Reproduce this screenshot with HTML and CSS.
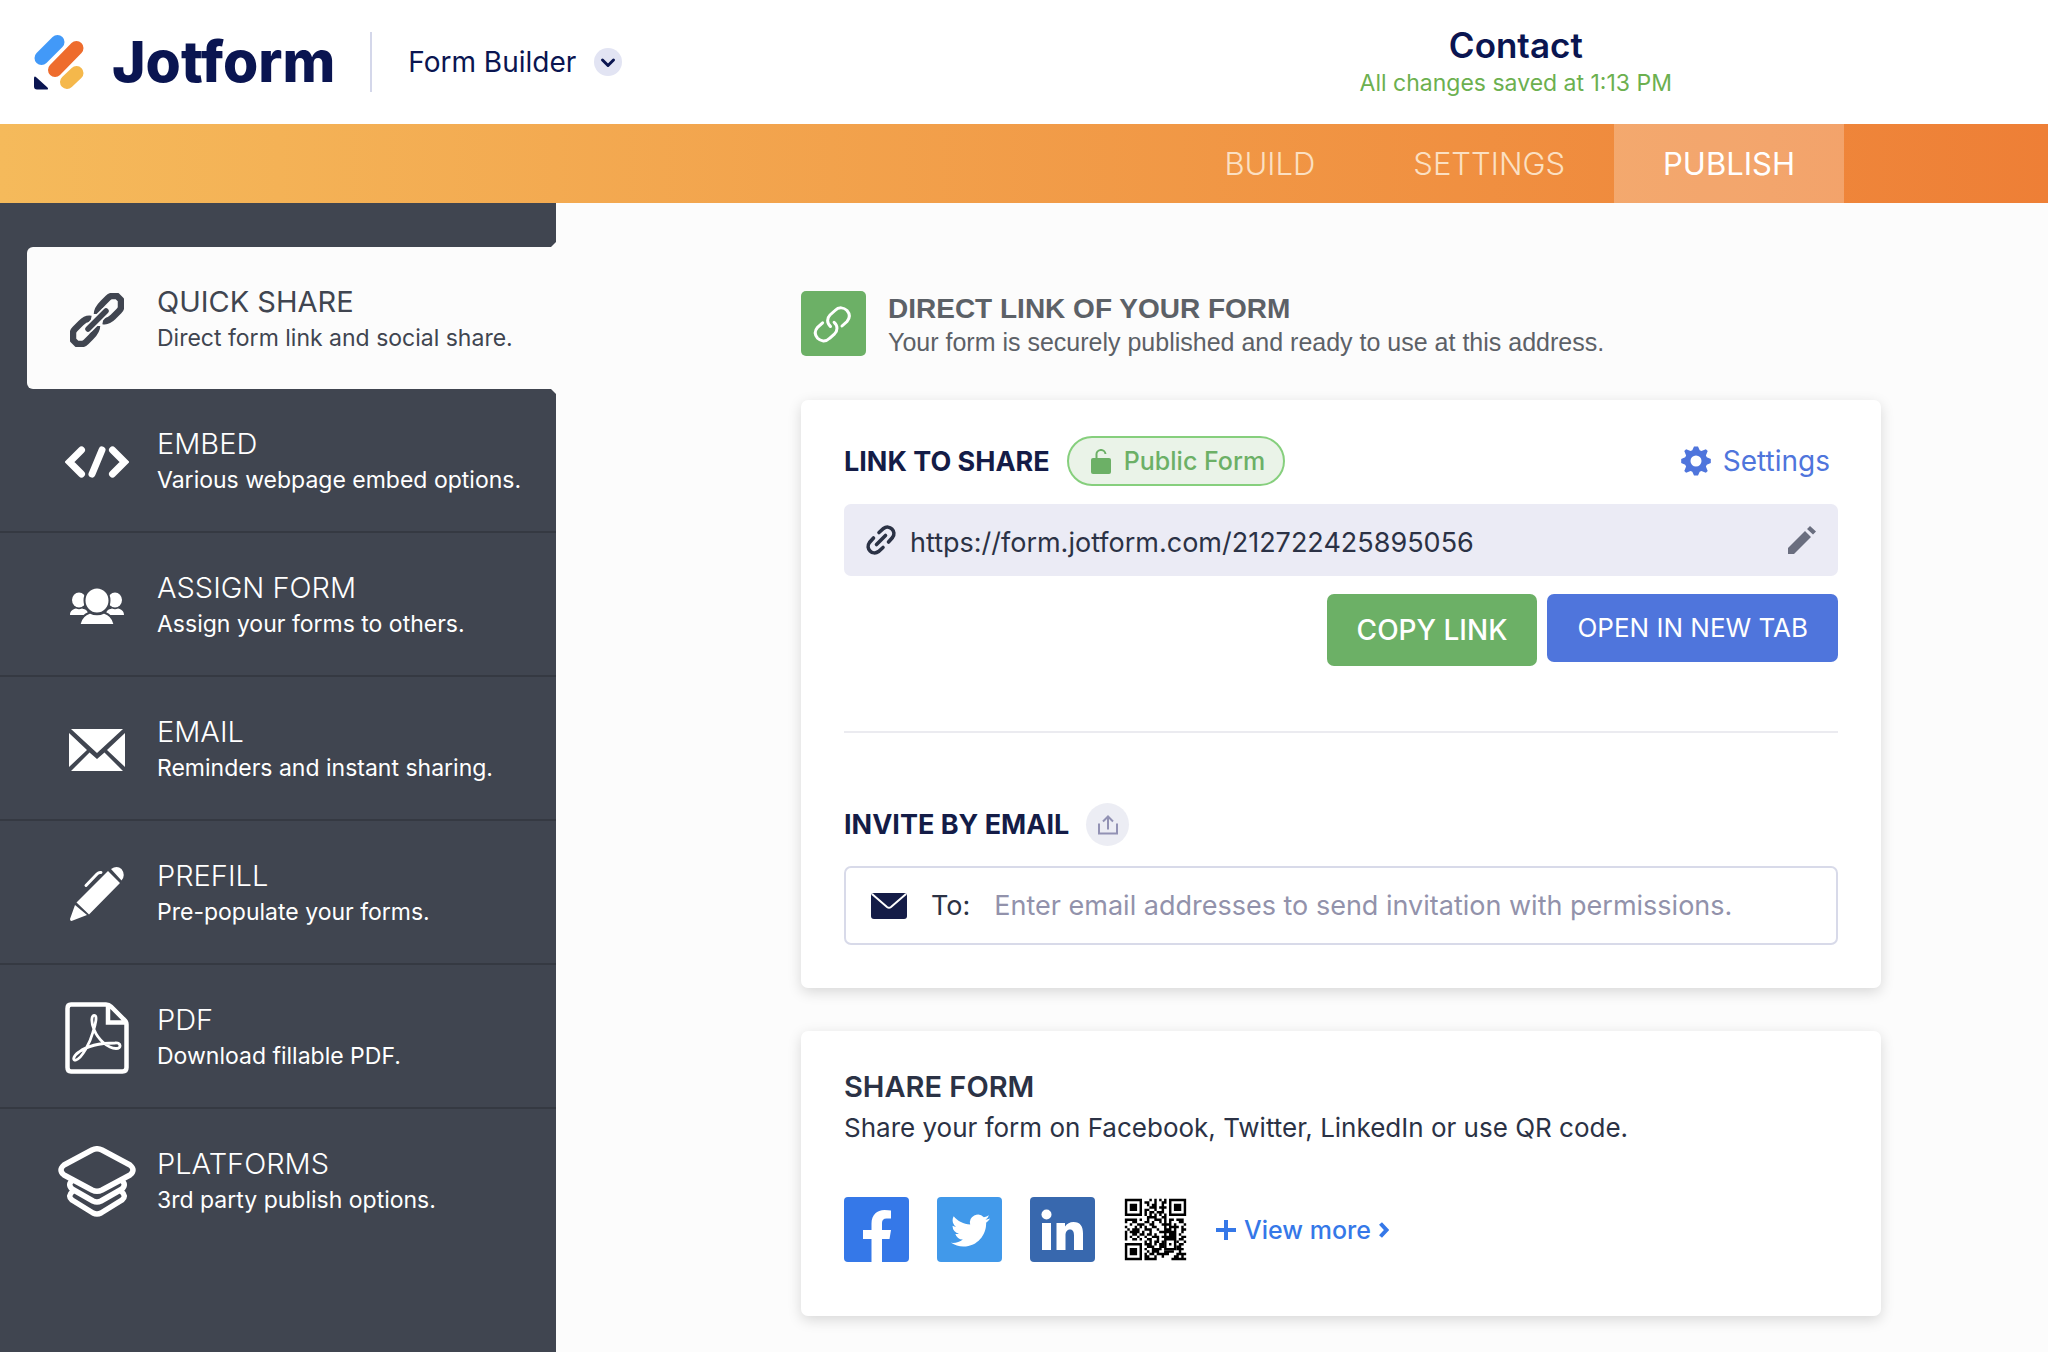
FILE: index.html
```html
<!DOCTYPE html>
<html lang="en">
<head>
<meta charset="utf-8">
<meta name="viewport" content="width=device-width, initial-scale=1">
<title>Contact - Jotform Form Builder</title>
<link rel="stylesheet" href="styles.css">
</head>
<body>
<header class="topbar">
  <div class="brand">
    <a class="logo" href="#" aria-label="Jotform">
      <svg width="50" height="56" viewBox="0 0 50 56" fill="none" stroke-width="14" stroke-linecap="round">
        <path stroke="#4299f8" d="M7.500 24 23.500 8"/>
        <path stroke="#ee6c2d" d="M21 36 42.500 14"/>
        <path stroke="#f5b84b" d="M33 48 42.500 39"/>
        <path fill="#0a1551" d="M0 44.500q0-3.500 2.500-1L13.500 53.500q1.500 2-1 2H3q-3 0-3-3z"/>
      </svg>
      <span class="wordmark">Jotform</span>
    </a>
    <button class="product" type="button">
      Form Builder
      <svg width="28" height="28" viewBox="0 0 28 28" fill="none">
        <circle cx="14" cy="14" r="14" fill="#e2e4f3"/>
        <path d="m8.500 12 5.500 5.500 5.500-5.500" stroke="#0a1551" stroke-width="3" stroke-linecap="round" stroke-linejoin="round"/>
      </svg>
    </button>
  </div>
  <div class="form-title">
    <h1>Contact</h1>
    <p>All changes saved at 1:13 PM</p>
  </div>
</header>

<nav class="tabs">
  <a href="#">BUILD</a>
  <a href="#">SETTINGS</a>
  <a class="current" href="#">PUBLISH</a>
</nav>

<div class="layout">
  <nav class="sidebar">
    <a class="item active" href="#">
      <span class="item-icon">
        <svg width="54" height="54" viewBox="0 0 54 54" fill="none" stroke="#404550" stroke-width="6.500" stroke-linejoin="round">
          <path d="M27 21c0-5 3-8 6-11l5-5q2-2 4-2h5l4 4v7q0 2-2 4l-6 6q-5 5-10 4"/>
          <path d="M27 33c0 5-3 8-6 11l-5 5q-2 2-4 2H7l-4-4v-7q0-2 2-4l6-6q5-5 10-4"/>
          <path d="m19 35 16-16" stroke="#fcfcfc" stroke-width="9" stroke-linecap="round"/>
          <path d="m18 36 18-18" stroke-width="5.500" stroke-linecap="round"/>
        </svg>
      </span>
      <span class="item-text"><span class="item-title">QUICK SHARE</span><span class="item-sub">Direct form link and social share.</span></span>
    </a>
    <a class="item" href="#">
      <span class="item-icon">
        <svg width="64" height="32" viewBox="0 0 64 32" fill="none" stroke="#fff" stroke-width="7" stroke-linecap="round">
          <path d="M16.500 4 4.500 16l12 12M47.500 4l12 12-12 12M37 4l-10 24"/>
        </svg>
      </span>
      <span class="item-text"><span class="item-title">EMBED</span><span class="item-sub">Various webpage embed options.</span></span>
    </a>
    <a class="item" href="#">
      <span class="item-icon">
        <svg width="54" height="36" viewBox="0 0 54 36" fill="#fff">
          <ellipse cx="9" cy="12" rx="7" ry="7.500"/><ellipse cx="45" cy="12" rx="7" ry="7.500"/>
          <path d="M0 27c0-4 3-6 6-6.500q3 1.500 6 0c4 1 6 2 6 6.500zM54 27c0-4-3-6-6-6.500q-3 1.500-6 0c-4 1-6 2-6 6.500z"/>
          <g stroke="#404550" stroke-width="2">
            <path d="M9.500 37c1-8 6-11 10.500-12.500q7 3.500 14 0c4.500 1.500 9.500 4.500 10.500 12.500z"/>
            <ellipse cx="27" cy="12.500" rx="12.500" ry="13"/>
          </g>
        </svg>
      </span>
      <span class="item-text"><span class="item-title">ASSIGN FORM</span><span class="item-sub">Assign your forms to others.</span></span>
    </a>
    <a class="item" href="#">
      <span class="item-icon">
        <svg width="56" height="42" viewBox="0 0 56 42" fill="#fff">
          <path d="M2 0h52L28 24zM0 4l18 17L0 38zM56 4 38 21l18 17zM2 42l18.500-18.500L28 30l7.500-6.500L54 42z"/>
        </svg>
      </span>
      <span class="item-text"><span class="item-title">EMAIL</span><span class="item-sub">Reminders and instant sharing.</span></span>
    </a>
    <a class="item" href="#">
      <span class="item-icon">
        <svg width="54" height="54" viewBox="0 0 54 54" fill="#fff">
          <path d="M5 38 17 48 1.500 54Q0 54 0 52zM6.500 35.500 38 4 50 16 19 47.500zM41 2q6-4 10.500 0 4.500 6 0 11.500z"/>
          <path d="M16 18.500 27 7q2-2 4-1.500" fill="none" stroke="#fff" stroke-width="3" stroke-linecap="round"/>
        </svg>
      </span>
      <span class="item-text"><span class="item-title">PREFILL</span><span class="item-sub">Pre-populate your forms.</span></span>
    </a>
    <a class="item" href="#">
      <span class="item-icon">
        <svg width="64" height="72" viewBox="0 0 64 72" fill="none" stroke="#fff" stroke-width="4.500">
          <path d="M6 2.500h35q3 0 5 2l13 13q2.500 2 2.500 5v43q0 4-4 4H6q-3.500 0-3.500-4v-59q0-4 3.500-4zM43 3v17.500h18"/>
          <path stroke-width="2.800" d="M30 13.500c-4-1-4 7-1 14 4 10 14 19 22 19 6 0 5-6-1-5.500-14 0-28 3-36 9-7 5-6 9-3 8 6-2 14-17 17-28 3-9 4-16 2-16.500z"/>
        </svg>
      </span>
      <span class="item-text"><span class="item-title">PDF</span><span class="item-sub">Download fillable PDF.</span></span>
    </a>
    <a class="item last" href="#">
      <span class="item-icon">
        <svg width="78" height="72" viewBox="0 0 78 72" fill="none" stroke="#fff" stroke-width="5.500" stroke-linejoin="round">
          <path d="M34 4q5-2.500 10 0l28 15q6 5 0 10L44 44q-5 2.500-10 0L6 29q-6-5 0-10z"/>
          <path d="M15 34q-6 4-1 9l21 12q4 2 8 0l21-12q5-5-1-9"/>
          <path d="M15 45q-6 5-1 9l21 13q4 2 8 0l21-13q5-4-1-9"/>
        </svg>
      </span>
      <span class="item-text"><span class="item-title">PLATFORMS</span><span class="item-sub">3rd party publish options.</span></span>
    </a>
  </nav>

  <main class="content">
    <div class="intro">
      <svg class="tile" viewBox="0 0 65 65" fill="none">
        <rect width="65" height="65" rx="5" fill="#6cb066"/>
        <g stroke="#fff" stroke-width="3" stroke-linecap="round">
          <path d="M29.500 35.500C25.500 32 26 27 29 24l5-4.500c4-4 9-3 12 0 3 3.500 3 7.500 0 11L41 35"/>
          <path transform="rotate(180 31.300 33.400)" d="M29.500 35.500C25.500 32 26 27 29 24l5-4.500c4-4 9-3 12 0 3 3.500 3 7.500 0 11L41 35"/>
        </g>
      </svg>
      <div>
        <h2>DIRECT LINK OF YOUR FORM</h2>
        <p>Your form is securely published and ready to use at this address.</p>
      </div>
    </div>

    <section class="card link-card">
      <div class="row">
        <h3>LINK TO SHARE</h3>
        <span class="badge">
          <svg width="20" height="25" viewBox="0 0 20 25">
            <rect y="9" width="20" height="16" rx="2" fill="#6cb066"/>
            <path d="M5.500 10V6a4.500 4.500 0 0 1 9-1" fill="none" stroke="#6cb066" stroke-width="2"/>
          </svg>
          Public Form
        </span>
        <a class="settings" href="#">
          <svg width="30" height="30" viewBox="-15 -15 30 30" fill="#4f75dc">
            <path fill-rule="evenodd" d="M-2-14.500h4l1.700 3.700 1.700.9 4.500-1.800 1.800 1.800-1.800 4.500.9 1.700 4 1.700v4l-4 1.700-.9 1.700 1.800 4.500-1.800 1.800-4.500-1.800-1.700.9-1.700 3.700h-4l-1.700-3.700-1.700-.9-4.500 1.800-1.800-1.800 1.800-4.500-.9-1.700-4-1.700v-4l4-1.700.9-1.700-1.800-4.500 1.800-1.800 4.500 1.800 1.700-.9zM0-5.500a5.500 5.500 0 1 0 0 11 5.500 5.500 0 0 0 0-11z"/>
          </svg>
          Settings
        </a>
      </div>
      <div class="url-bar">
        <svg width="30" height="30" viewBox="0 0 30 30" fill="none" stroke="#2b3245" stroke-width="3.600" stroke-linecap="round">
          <path d="M13 7.500 17.500 3.500c6-4.500 13.500 3 9 9L22.500 17M17 22.500l-4.500 4C6.500 31 -1 23.500 3.500 17.500L7.500 13M10.500 19.500l9-9"/>
        </svg>
        <input type="text" aria-label="Form link" value="https://form.jotform.com/212722425895056" readonly>
        <button class="edit" type="button" aria-label="Edit link">
          <svg width="28" height="28" viewBox="0 0 28 28" fill="#6a6e7f">
            <path d="M0 22 17 5l6 6L6 28H0zM19 3l3-3 6 5.500-3 3z"/>
          </svg>
        </button>
      </div>
      <div class="actions">
        <button class="btn copy" type="button">COPY LINK</button>
        <button class="btn open" type="button">OPEN IN NEW TAB</button>
      </div>
      <hr>
      <div class="row invite-row">
        <h3><label for="invite">INVITE BY EMAIL</label></h3>
        <button class="round" type="button" aria-label="Share">
          <svg width="20" height="20" viewBox="0 0 20 20" fill="none" stroke="#9292b4" stroke-width="2">
            <path d="M1 8.500V18.500H19V8.500M10 14.500V2M5 6.500l5-5 5 5"/>
          </svg>
        </button>
      </div>
      <div class="invite">
        <svg width="36" height="26" viewBox="0 0 36 26">
          <rect width="36" height="26" rx="3" fill="#141c47"/>
          <path d="m1 1 15 13q2 1.500 4 0L35 1" fill="none" stroke="#fff" stroke-width="2"/>
        </svg>
        <span class="to">To:</span>
        <input id="invite" type="text" placeholder="Enter email addresses to send invitation with permissions.">
      </div>
    </section>

    <section class="card share-card">
      <h2>SHARE FORM</h2>
      <p>Share your form on Facebook, Twitter, LinkedIn or use QR code.</p>
      <div class="socials">
        <a href="#" aria-label="Facebook">
          <svg class="tile" viewBox="0 0 65 65">
            <rect width="65" height="65" rx="4" fill="#3578e8"/>
            <path fill="#fff" d="M27.500 65V42H19V33h8.500v-6.500C27.500 18 33 13 40.500 13q4 0 6.500.6V21.500h-4.500q-4.500 0-4.500 4.500v7h9l-1.500 9H38v23z"/>
          </svg>
        </a>
        <a href="#" aria-label="Twitter">
          <svg class="tile" viewBox="0 0 65 65">
            <rect width="65" height="65" rx="4" fill="#4199ea"/>
            <path fill="#fff" transform="translate(14 14) scale(1.630)" d="M23.953 4.570a10 10 0 01-2.825.775 4.958 4.958 0 002.163-2.723c-.951.555-2.005.959-3.127 1.184a4.920 4.920 0 00-8.384 4.482C7.690 8.095 4.067 6.130 1.640 3.162a4.822 4.822 0 00-.666 2.475c0 1.710.870 3.213 2.188 4.096a4.904 4.904 0 01-2.228-.616v.060a4.923 4.923 0 003.946 4.827 4.996 4.996 0 01-2.212.085 4.936 4.936 0 004.604 3.417 9.867 9.867 0 01-6.102 2.105c-.390 0-.779-.023-1.170-.067a13.995 13.995 0 007.557 2.209c9.053 0 13.998-7.496 13.998-13.985 0-.210 0-.420-.015-.630A9.935 9.935 0 0024 4.590z"/>
          </svg>
        </a>
        <a href="#" aria-label="LinkedIn">
          <svg class="tile" viewBox="0 0 65 65">
            <rect width="65" height="65" rx="4" fill="#3868ae"/>
            <circle cx="16.500" cy="17.500" r="5" fill="#fff"/>
            <path fill="#fff" d="M12 26h9v27h-9zM26.500 26h8.500v3.500q3-4.500 8.500-4.500c7 0 9.500 4.500 9.500 11.500V53h-9V38.500c0-3.500-1-6-4-6s-4.500 2.500-4.500 6V53h-9z"/>
          </svg>
        </a>
        <a href="#" aria-label="QR code">
          <svg class="tile" viewBox="-0.750 -0.750 26.500 26.500" fill="none" stroke="#000">
            <path d="M.5.5h6v6h-6zM18.500.5h6v6h-6zM.5 18.500h6v6h-6zM16.500 16.500h4v4h-4z"/>
            <path d="M2 3.500h3M2 2.500h3M2 4.500h3M20 2.500h3M20 3.500h3M20 4.500h3M2 20.500h3M2 21.500h3M2 22.500h3M18 18.500h1"/>
            <path d="M10 .5h1M12 .5h1M14 .5h1M16 .5h1M8 1.500h2M12 1.500h1M15 1.500h2M9 2.500h1M11 2.500h2M15 2.500h1M10 3.500h3M14 3.500h3M8 4.500h2M12 4.500h1M15 4.500h1M8 5.500h1M10 5.500h2M13 5.500h3M8 6.500h1M10 6.500h1M12 6.500h1M14 6.500h1M16 6.500h1M9 7.500h4M15 7.500h2M0 8.500h5M6 8.500h1M9 8.500h1M12 8.500h3M16 8.500h1M18 8.500h2M21 8.500h3M0 9.500h1M3 9.500h2M8 9.500h2M11 9.500h1M14 9.500h1M16 9.500h1M18 9.500h1M22 9.500h2M2 10.500h1M5 10.500h3M10 10.500h2M15 10.500h4M20 10.500h1M24 10.500h1M0 11.500h1M4 11.500h1M6 11.500h1M8 11.500h1M11 11.500h2M16 11.500h1M18 11.500h4M23 11.500h1M1 12.500h1M3 12.500h3M8 12.500h3M13 12.500h1M16 12.500h3M20 12.500h1M23 12.500h2M0 13.500h1M2 13.500h4M7 13.500h1M10 13.500h1M14 13.500h7M23 13.500h1M0 14.500h1M3 14.500h2M6 14.500h2M9 14.500h2M12 14.500h1M16 14.500h1M18 14.500h3M22 14.500h1M0 15.500h1M2 15.500h1M5 15.500h1M8 15.500h1M11 15.500h3M15 15.500h6M23 15.500h2M0 16.500h1M3 16.500h2M6 16.500h1M9 16.500h2M13 16.500h1M22 16.500h2M8 17.500h1M10 17.500h1M12 17.500h2M15 17.500h1M21 17.500h1M24 17.500h1M8 18.500h3M12 18.500h1M14 18.500h2M22 18.500h2M9 19.500h3M14 19.500h2M21 19.500h2M8 20.500h1M11 20.500h4M21 20.500h3M9 21.500h1M11 21.500h3M16 21.500h4M22 21.500h1M8 22.500h1M10 22.500h2M13 22.500h5M21 22.500h4M8 23.500h2M12 23.500h1M15 23.500h1M20 23.500h2M23 23.500h1M8 24.500h5M19 24.500h6"/>
          </svg>
        </a>
        <a class="more" href="#">
          <svg width="20" height="20" viewBox="0 0 20 20"><path d="M10 0v20M0 10h20" stroke="#3578e8" stroke-width="4"/></svg>
          <span>View more</span>
          <svg width="10" height="16" viewBox="0 0 10 16" fill="none"><path d="m1.500 1.500 6 6.500-6 6.500" stroke="#3578e8" stroke-width="4"/></svg>
        </a>
      </div>
    </section>
  </main>
</div>
</body>
</html>
```

FILE: styles.css
```css
* { box-sizing: border-box; }

body, h1, h2, h3, p { margin: 0; }

body {
  display: flex;
  flex-direction: column;
  min-height: 100vh;
  background: #fcfcfc;
  color: #2b3245;
  font-family: Inter, "Liberation Sans", sans-serif;
}

a { color: inherit; text-decoration: none; }

button, input { font: inherit; color: inherit; border: 0; background: none; padding: 0; }

svg { display: block; flex: none; }

/* Top bar */
.topbar {
  display: flex;
  align-items: center;
  justify-content: space-between;
  min-height: 124px;
  padding: 0 376px 0 34px;
  background: #fff;
  color: #0a1551;
}

.brand, .logo, .product { display: flex; align-items: center; }

.logo { gap: 28px; padding-right: 35px; }

.wordmark { font-size: 57px; font-weight: 800; line-height: 60px; }

.product {
  gap: 18px;
  min-height: 60px;
  padding-left: 36px;
  border-left: 2px solid #d4d7ea;
  font-size: 28px;
}

.form-title { padding-top: 2px; text-align: center; }

.form-title h1 { font-size: 35px; font-weight: 600; line-height: 40px; }

.form-title p { color: #6cb04f; font-size: 23px; line-height: 36px; }

/* Tabs */
.tabs {
  display: flex;
  justify-content: flex-end;
  padding-right: 204px;
  background: linear-gradient(90deg, #f5ba5b, #ee7f36);
  color: #fbe0c3;
  font-size: 31px;
  font-weight: 300;
  line-height: 79px;
}

.tabs a { padding: 0 49px; }

.tabs .current { background: rgba(255, 255, 255, 0.25); color: #fff; font-weight: 400; }

/* Sidebar */
.layout { display: flex; flex: 1; }

.sidebar { width: 556px; flex: none; padding-top: 44px; background: #404550; color: #fff; }

.item {
  display: flex;
  align-items: center;
  gap: 20px;
  min-height: 144px;
  padding: 4px 0 0 57px;
  border-bottom: 2px solid #353942;
}

.item.active, .item.last { min-height: 142px; border-bottom: 0; }

.item.active {
  position: relative;
  margin-left: 27px;
  padding-left: 30px;
  border-radius: 6px 0 0 6px;
  background: #fcfcfc;
  color: #404550;
}

/* Bevelled corners where the active item meets the page */
.item.active::before, .item.active::after {
  content: "";
  position: absolute;
  right: 0;
  width: 5px;
  height: 5px;
  background: #fcfcfc;
}

.item.active::before { bottom: 100%; clip-path: polygon(100% 0, 100% 100%, 0 100%); }

.item.active::after { top: 100%; clip-path: polygon(0 0, 100% 0, 100% 100%); }

.item-icon { display: flex; justify-content: center; width: 80px; }

.item-text { display: flex; flex-direction: column; line-height: 37px; }

.item-title { font-size: 29px; font-weight: 300; }

.active .item-title { font-weight: 400; }

.item-sub { font-size: 23px; }

/* Content */
.content {
  display: flex;
  flex: 1;
  flex-direction: column;
  gap: 43px;
  min-width: 0;
  padding: 88px 167px 38px 245px;
}

.tile { width: 65px; height: 65px; }

.intro { display: flex; gap: 22px; color: #5c6167; font-family: "Liberation Sans", Arial, sans-serif; }

.intro h2 { font-size: 28px; line-height: 36px; }

.intro p { font-size: 25px; line-height: 30px; }

.card {
  padding: 36px 43px 43px;
  border-radius: 7px;
  background: #fff;
  box-shadow: 0 4px 14px rgba(0, 0, 0, 0.15);
}

.row { display: flex; align-items: center; gap: 17px; }

.card h3 { color: #141c47; font-size: 27px; font-weight: 700; }

.badge {
  display: flex;
  align-items: center;
  gap: 13px;
  min-height: 50px;
  padding: 0 18px 0 22px;
  border: 2px solid #86cf7d;
  border-radius: 25px;
  background: #eaf3e8;
  color: #6cb066;
  font-size: 25px;
  font-weight: 500;
}

.settings {
  display: flex;
  align-items: center;
  gap: 12px;
  margin-left: auto;
  padding-right: 8px;
  color: #4f75dc;
  font-size: 28px;
}

.url-bar {
  display: flex;
  align-items: center;
  gap: 14px;
  min-height: 72px;
  margin-top: 18px;
  padding: 0 22px;
  border-radius: 7px;
  background: #ebebf5;
  font-size: 27px;
}

.url-bar input, .invite input { flex: 1; min-width: 0; outline: 0; }

.url-bar input { padding-top: 4px; }

.actions { display: flex; align-items: flex-start; justify-content: flex-end; gap: 10px; margin-top: 18px; }

.btn { padding: 0 30px; border-radius: 7px; color: #fff; line-height: 68px; }

.copy { padding-block: 2px; background: #6cb066; font-size: 28px; font-weight: 500; }

.open { background: #4f75dc; font-size: 26px; }

hr { width: 100%; height: 2px; margin: 65px 0 70px; border: 0; background: #ebebf0; }

.round {
  display: flex;
  align-items: center;
  justify-content: center;
  width: 43px;
  height: 43px;
  border-radius: 50%;
  background: #ecedf4;
}

.invite {
  display: flex;
  align-items: center;
  gap: 24px;
  min-height: 79px;
  margin-top: 20px;
  padding: 0 25px;
  border: 2px solid #d8dae9;
  border-radius: 7px;
  font-size: 27px;
}

.invite input::placeholder { color: #9292ab; opacity: 1; }

.share-card { padding-bottom: 54px; }

.share-card h2 { font-size: 29px; font-weight: 600; line-height: 40px; }

.share-card p { font-size: 26px; line-height: 42px; }

.socials { display: flex; align-items: center; gap: 28px; margin-top: 48px; }

.more { display: flex; align-items: center; gap: 8px; color: #3578e8; font-size: 25px; font-weight: 500; }
```
